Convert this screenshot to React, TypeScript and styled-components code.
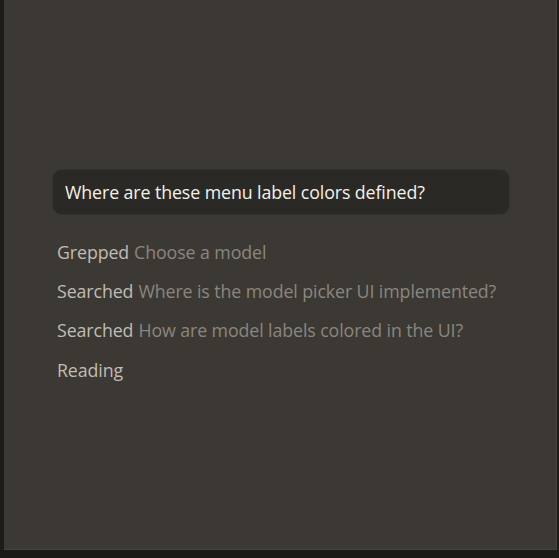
import React from "react";
import styled, { createGlobalStyle } from "styled-components";

const Global = createGlobalStyle`
  html, body { margin: 0; padding: 0; background: #1c1b17; }
  body { font-family: "Open Sans", "Noto Sans", sans-serif; }
`;

const Frame = styled.div`
  width: 559px;
  height: 558px;
  box-sizing: border-box;
  padding: 0 2px 8px 4px;
  background: #1c1b17;
`;

const Panel = styled.div`
  height: 100%;
  box-sizing: border-box;
  background: #3c3934;
  border-right: 1px solid #48453f;
  border-bottom: 1px solid #48453f;
  padding: 169px 46px 0 48px;
  display: flex;
  flex-direction: column;
`;

const Prompt = styled.div`
  height: 46px;
  box-sizing: border-box;
  background: #2b2925;
  border: 1px solid #34322d;
  border-radius: 10px;
  padding: 0 12px;
  display: flex;
  align-items: center;
  color: #f3f1ec;
  font-size: 17.8px;
  letter-spacing: -0.1px;
  white-space: nowrap;
`;

const Steps = styled.div`
  margin-top: 17px;
  padding-left: 5px;
  display: flex;
  flex-direction: column;
`;

const Step = styled.div`
  height: 39.3px;
  display: flex;
  align-items: center;
  gap: 5px;
  font-size: 17.8px;
  letter-spacing: -0.1px;
  white-space: nowrap;
`;

const Verb = styled.span`
  color: #c0bcb5;
`;

const Detail = styled.span`
  color: #8a867f;
`;

const steps = [
  { verb: "Grepped", detail: "Choose a model" },
  { verb: "Searched", detail: "Where is the model picker UI implemented?" },
  { verb: "Searched", detail: "How are model labels colored in the UI?" },
  { verb: "Reading", detail: "" },
];

export default function App() {
  return (
    <Frame>
      <Global />
      <Panel>
        <Prompt>Where are these menu label colors defined?</Prompt>
        <Steps>
          {steps.map((s, i) => (
            <Step key={i}>
              <Verb>{s.verb}</Verb>
              {s.detail && <Detail>{s.detail}</Detail>}
            </Step>
          ))}
        </Steps>
      </Panel>
    </Frame>
  );
}
